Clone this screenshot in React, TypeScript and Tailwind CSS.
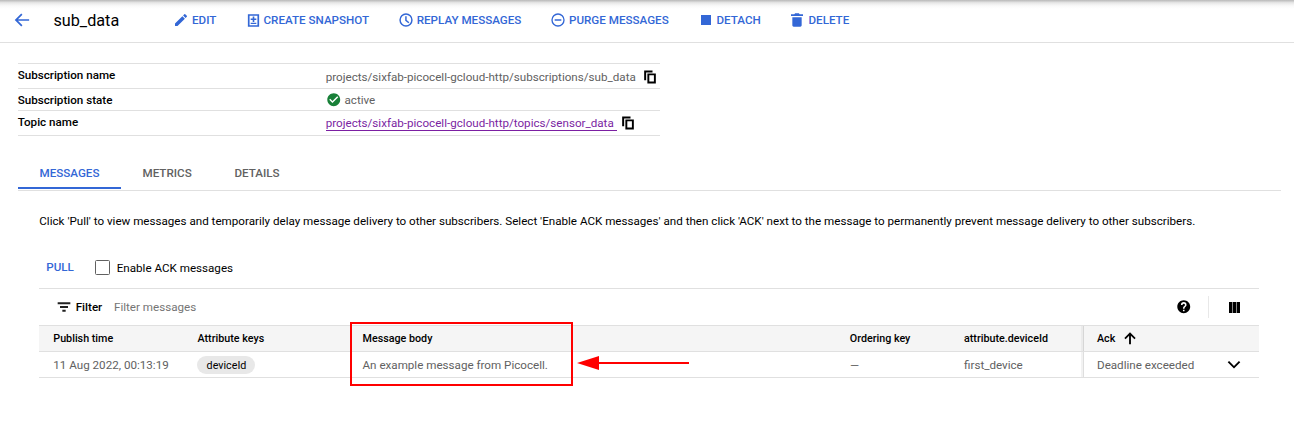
import React from "react";

type IconProps = { d: string; className: string };

function Icon({ d, className }: IconProps) {
  return (
    <svg viewBox="0 0 24 24" fill="currentColor" className={`block shrink-0 ${className}`} aria-hidden="true">
      <path fillRule="evenodd" d={d} />
    </svg>
  );
}

const paths = {
  back: "M21.500 10.900H6.600l6-6L11 3.300 2.300 12l8.700 8.700 1.600-1.600-6-6h14.900v-2.200z",
  edit: "M3 17.25V21h3.75L17.81 9.94l-3.75-3.75L3 17.25zM20.71 7.04a.996.996 0 0 0 0-1.41l-2.34-2.34a.996.996 0 0 0-1.41 0l-1.83 1.83 3.75 3.75 1.83-1.83z",
  snapshot: "M3 2h18v20H3V2zm2.700 2.300v15.400h12.600V4.300H5.700zM10.700 5.500h2.600v3.200h3.200v2.500h-3.200v3.200h-2.600v-3.200H7.500V8.700h3.200V5.500zM7.500 15.500h9v2.200h-9v-2.200z",
  clock: "M12 2a10 10 0 1 0 0 20 10 10 0 0 0 0-20zm0 2.200a7.800 7.800 0 1 1 0 15.600 7.800 7.800 0 0 1 0-15.600zM10.800 6.500V13l4.800 4 1.400-1.700-4-3.300V6.500h-2.200z",
  purge: "M12 2a10 10 0 1 0 0 20 10 10 0 0 0 0-20zm0 2a8 8 0 1 1 0 16 8 8 0 0 1 0-16zM7 11v2h10v-2H7z",
  trash: "M5 8v12c0 1.100.9 2 2 2h10c1.100 0 2-.9 2-2V8H5zM21 3.500h-5L14.800 2H9.200L8 3.500H3V6h18V3.500z",
  copy: "M16.300 1H2v16.500h3.400V4.400h10.900V1zM22 5.800H7.500V23H22V5.800zM18.700 19.700h-7.900V9.100h7.900v10.600z",
  check: "M12 2C6.480 2 2 6.480 2 12s4.480 10 10 10 10-4.480 10-10S17.520 2 12 2zm-2 15-5-5 1.600-1.600L10 13.800l7.400-7.400L19 8l-9 9z",
  filter: "M9.500 19h5v-2.800h-5V19zM2.500 5v2.800h19V5h-19zM6 13.400h12v-2.800H6v2.800z",
  help: "M12 2C6.480 2 2 6.480 2 12s4.480 10 10 10 10-4.480 10-10S17.520 2 12 2zm1.200 17h-2.400v-2.400h2.400V19zm2.200-7.600-1 1c-.8.8-1.200 1.400-1.200 2.800h-2.400v-.6c0-1.100.5-2.100 1.200-2.800l1.300-1.300c.4-.3.6-.8.6-1.400a1.900 1.900 0 0 0-3.800 0H7.700a4.300 4.300 0 0 1 8.600 0c0 .9-.4 1.700-.9 2.300z",
  up: "M3.500 12l1.900 1.900 5.200-5.200V21.500h2.800V8.700l5.200 5.200 1.900-1.900L12 3.500 3.500 12z",
  down: "M4.600 6 12 13.400 19.400 6l2 2L12 17.400 2.600 8l2-2z",
};

type ActionProps = { className: string; icon: React.ReactNode; label: string };

function Action({ className, icon, label }: ActionProps) {
  return (
    <button className={`flex items-center whitespace-nowrap text-[11.63px] leading-4 font-medium text-[#3367d6] ${className}`}>
      {icon}
      <span>{label}</span>
    </button>
  );
}

function Toolbar() {
  return (
    <header className="flex h-[43px] border-b border-[#e0e0e0] bg-[linear-gradient(to_bottom,#bdbdbd_0px,#c4c4c4_1px,#dedede_2px,#efefef_4px,#fafafa_6px,#ffffff_9px)] pl-[13px]">
      <div className="flex h-10 items-center">
        <Icon d={paths.back} className="size-[18px] text-[#3367d6]" />
        <h1 className="ml-[22.5px] w-[119.5px] pt-px text-[16.2px] leading-5 text-black">sub_data</h1>
        <Action className="w-[72.500px] gap-[3px]" label="EDIT" icon={<Icon d={paths.edit} className="size-4" />} />
        <Action className="w-[152px] gap-[3px]" label="CREATE SNAPSHOT" icon={<Icon d={paths.snapshot} className="size-[15px]" />} />
        <Action className="w-[152px] gap-[3.200px]" label="REPLAY MESSAGES" icon={<Icon d={paths.clock} className="size-4" />} />
        <Action className="w-[151px] gap-[3.500px]" label="PURGE MESSAGES" icon={<Icon d={paths.purge} className="size-4" />} />
        <Action className="w-[88px] gap-[5.500px] pl-[0.5px]" label="DETACH" icon={<span className="size-[10px] bg-[#3367d6]" />} />
        <Action className="gap-[4px]" label="DELETE" icon={<Icon d={paths.trash} className="size-4" />} />
      </div>
    </header>
  );
}

function Summary() {
  return (
    <dl className="ml-[18px] mt-5 w-[642px] border-t border-[#e0e0e0] text-[11.63px] leading-[14px]">
      <div className="flex h-[25px] border-b border-[#e0e0e0]">
        <dt className="-ml-[0.3px] w-[308px] pt-1 font-medium text-black">Subscription name</dt>
        <dd className="flex pt-[6px] text-[#616161]">
          <span className="w-[317.300px]">projects/sixfab-picocell-gcloud-http/subscriptions/sub_data</span>
          <Icon d={paths.copy} className="size-[14px] text-black" />
        </dd>
      </div>
      <div className="flex h-[22px] border-b border-[#e0e0e0]">
        <dt className="-ml-[0.3px] w-[308px] pt-1 font-medium text-black">Subscription state</dt>
        <dd className="flex pt-1 text-[#616161]">
          <Icon d={paths.check} className="-mt-px ml-[0.3px] size-[15.500px] text-[#188038]" />
          <span className="ml-[3px]">active</span>
        </dd>
      </div>
      <div className="flex h-[25px] border-b border-[#e0e0e0]">
        <dt className="-ml-[0.3px] w-[308px] pt-1 font-medium text-black">Topic name</dt>
        <dd className="flex pt-[5px] text-[#7b1fa2]">
          <a className="mr-[4.300px] h-[15px] w-[291px] border-b border-[#7b1fa2]">projects/sixfab-picocell-gcloud-http/topics/sensor_data</a>
          <Icon d={paths.copy} className="size-[14px] text-black" />
        </dd>
      </div>
    </dl>
  );
}

function Tabs() {
  return (
    <nav className="ml-[18px] mt-[24px] flex h-[31px] w-[1263px] border-b border-[#e0e0e0] text-[11.63px] font-medium leading-[14px] text-[#616161]">
      <a className="h-[29px] w-[103px] border-b-2 border-[#3367d6] pl-[21.500px] pt-[6px] text-[#3367d6]">MESSAGES</a>
      <a className="w-[92px] pl-[21.500px] pt-[6px]">METRICS</a>
      <a className="pl-[21.500px] pt-[6px]">DETAILS</a>
    </nav>
  );
}

function MessagesTable() {
  return (
    <section className="relative ml-[39px] mt-[13px] w-[1220px] border-t border-[#e0e0e0] text-[11.63px] leading-[14px]">
      <div className="flex h-9 items-center">
        <Icon d={paths.filter} className="ml-[17px] size-4 text-[#212121]" />
        <span className="ml-[3.700px] w-[38.300px] pb-px font-medium text-black">Filter</span>
        <span className="flex-1 pb-px text-[#757575]">Filter messages</span>
        <Icon d={paths.help} className="mr-px size-[15.500px] text-black" />
        <div className="ml-[16px] h-[22px] w-px bg-[#e8e8e8]" />
        <div className="ml-5 mr-[19px] flex gap-px bg-[#8a8a8a]">
          <i className="h-[11px] w-[3px] bg-black" />
          <i className="h-[11px] w-[3px] bg-black" />
          <i className="h-[11px] w-[3px] bg-black" />
        </div>
      </div>
      <div className="flex h-[27px] items-center border-y border-[#e0e0e0] bg-[#f5f5f5] text-[10.74px] font-medium text-black">
        <span className="w-[144px] pl-[14.300px]">Publish time</span>
        <span className="w-[166px] pl-[14.500px]">Attribute keys</span>
        <span className="w-[487px] pl-[13.500px]">Message body</span>
        <span className="w-[114px] pl-[13.800px]">Ordering key</span>
        <span className="w-[131px] pl-[14px]">attribute.deviceId</span>
        <span className="h-full w-[3px] border-r border-[#d6d6d6] bg-[#ebebeb]" />
        <span className="pl-[13px]">Ack</span>
        <Icon d={paths.up} className="mb-px ml-[7px] size-4" />
      </div>
      <div className="flex h-[26px] items-center border-b border-[#e0e0e0] text-[#616161]">
        <span className="w-[158px] pl-[14.300px] pt-px">11 Aug 2022, 00:13:19</span>
        <span className="w-[152px]">
          <span className="flex h-[18px] w-[58px] items-center justify-center rounded-full bg-[#e8e8e8] pl-px pt-[2px] text-[10.74px] text-black">deviceId</span>
        </span>
        <span className="w-[487px] pl-[13.500px] pt-px">An example message from Picocell.</span>
        <span className="w-[114px] pl-[14px] pt-px">—</span>
        <span className="w-[131px] pl-[14px] pt-px">first_device</span>
        <span className="h-full w-[3px] border-r border-[#dedede] bg-[#f2f2f2]" />
        <span className="flex-1 pl-[13px] pt-px">Deadline exceeded</span>
        <Icon d={paths.down} className="mr-[17px] size-4 text-black" />
      </div>
      <div className="absolute left-[311px] top-[33px] h-[64px] w-[223px] border-2 border-[#ff0000]" />
      <svg viewBox="0 0 112 14" className="absolute left-[538px] top-[67px] h-[14px] w-[112px]" fill="#ff0000" aria-hidden="true">
        <path d="M0 7 22 0v14zM22 6h90v2H22z" />
      </svg>
    </section>
  );
}

export default function App() {
  return (
    <main className="h-[422px] w-[1294px] overflow-hidden bg-white font-['Roboto',sans-serif]">
      <Toolbar />
      <Summary />
      <Tabs />
      <p className="ml-[39.300px] mt-[23px] whitespace-nowrap text-[11.64px] leading-[14px] text-black">
        Click 'Pull' to view messages and temporarily delay message delivery to other subscribers. Select 'Enable ACK messages' and then click 'ACK' next to the message to permanently prevent message delivery to other subscribers.
      </p>
      <div className="ml-[46.300px] mt-[31px] flex h-4 items-center text-[11.63px] leading-[14px]">
        <button className="w-[48.700px] text-left font-medium text-[#3367d6]">PULL</button>
        <span className="size-[15px] rounded-[1.5px] border border-[#616161]" />
        <span className="ml-[6.700px] pt-px text-black">Enable ACK messages</span>
      </div>
      <MessagesTable />
    </main>
  );
}
